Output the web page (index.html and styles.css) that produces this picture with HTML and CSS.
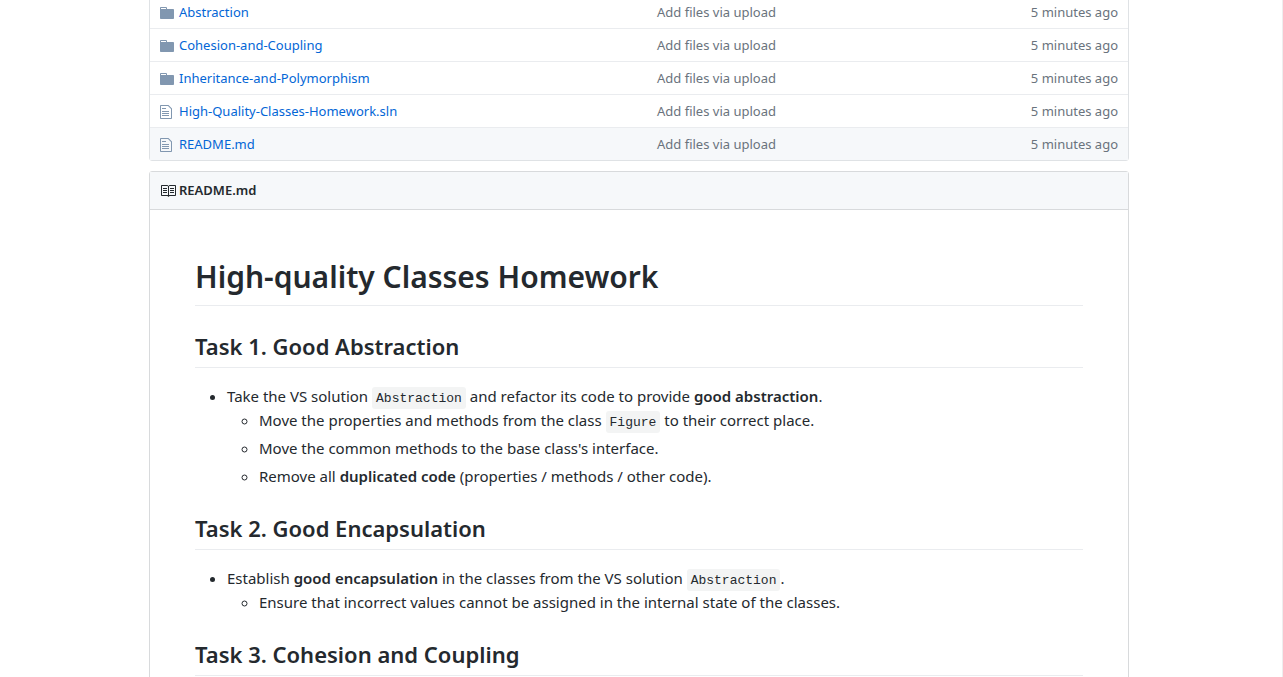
FILE: index.html
```
<!DOCTYPE html>
<html lang="en">
<head>
<meta charset="utf-8">
<title>High-quality Classes Homework</title>
<link rel="stylesheet" href="styles.css">
</head>
<body>
<svg class="sprite" aria-hidden="true">
  <symbol id="folder" viewBox="0 0 14 16"><path d="M13 4H7V3c0-.66-.31-1-1-1H1c-.55 0-1 .45-1 1v10c0 .55.45 1 1 1h12c.55 0 1-.45 1-1V5c0-.55-.45-1-1-1zM6 4H1V3h5v1z"/></symbol>
  <symbol id="file" viewBox="0 0 12 16"><path d="M6 5H2V4h4v1zM2 8h7V7H2v1zm0 2h7V9H2v1zm0 2h7v-1H2v1zm10-7.500V14c0 .55-.45 1-1 1H1c-.55 0-1-.45-1-1V2c0-.55.45-1 1-1h7.500L12 4.500zM11 5L8 2H1v12h10V5z"/></symbol>
  <symbol id="book" viewBox="0 0 16 16"><path d="M3 5h4v1H3V5zm0 3h4V7H3v1zm0 2h4V9H3v1zm11-5h-4v1h4V5zm0 2h-4v1h4V7zm0 2h-4v1h4V9zm2-6v9c0 .55-.45 1-1 1H9.500l-1 1-1-1H2c-.55 0-1-.45-1-1V3c0-.55.45-1 1-1h5.500l1 1 1-1H15c.55 0 1 .45 1 1zm-8 .5L7.500 3H2v9h6V3.500zm7-.5H9.500l-.5.5V12h6V3z"/></symbol>
</svg>
<main class="container">
  <div class="file-wrap">
    <table class="files">
      <tbody>
        <tr><td class="icon"><svg width="14" height="16"><use href="#folder"/></svg></td><td class="name"><a href="#">Abstraction</a></td><td class="message">Add files via upload</td><td class="age">5 minutes ago</td></tr>
        <tr><td class="icon"><svg width="14" height="16"><use href="#folder"/></svg></td><td class="name"><a href="#">Cohesion-and-Coupling</a></td><td class="message">Add files via upload</td><td class="age">5 minutes ago</td></tr>
        <tr><td class="icon"><svg width="14" height="16"><use href="#folder"/></svg></td><td class="name"><a href="#">Inheritance-and-Polymorphism</a></td><td class="message">Add files via upload</td><td class="age">5 minutes ago</td></tr>
        <tr><td class="icon"><svg width="12" height="16"><use href="#file"/></svg></td><td class="name"><a href="#">High-Quality-Classes-Homework.sln</a></td><td class="message">Add files via upload</td><td class="age">5 minutes ago</td></tr>
        <tr class="current"><td class="icon"><svg width="12" height="16"><use href="#file"/></svg></td><td class="name"><a href="#">README.md</a></td><td class="message">Add files via upload</td><td class="age">5 minutes ago</td></tr>
      </tbody>
    </table>
  </div>
  <section class="readme">
    <h3 class="readme-title"><svg width="16" height="16"><use href="#book"/></svg>README.md</h3>
    <article class="markdown">
      <h1>High-quality Classes Homework</h1>
      <h2>Task 1. Good Abstraction</h2>
      <ul>
        <li>Take the VS solution <code>Abstraction</code> and refactor its code to provide <strong>good abstraction</strong>.
          <ul>
            <li>Move the properties and methods from the class <code>Figure</code> to their correct place.</li>
            <li>Move the common methods to the base class's interface.</li>
            <li>Remove all <strong>duplicated code</strong> (properties / methods / other code).</li>
          </ul>
        </li>
      </ul>
      <h2>Task 2. Good Encapsulation</h2>
      <ul>
        <li>Establish <strong>good encapsulation</strong> in the classes from the VS solution <code>Abstraction</code>.
          <ul>
            <li>Ensure that incorrect values cannot be assigned in the internal state of the classes.</li>
          </ul>
        </li>
      </ul>
      <h2>Task 3. Cohesion and Coupling</h2>
    </article>
  </section>
</main>
</body>
</html>
```
FILE: styles.css
```
* {
  box-sizing: border-box;
}

html {
  scrollbar-width: none;
}

body {
  min-height: 100vh;
  margin: 0;
  padding-right: 4px;
  border-right: 1px solid #eee;
  background: #fff;
  color: #24292e;
  font: 13px/20px "Noto Sans", "Open Sans", sans-serif;
}

.sprite {
  display: none;
}

svg {
  display: block;
  fill: currentColor;
}

.container {
  display: flow-root;
  max-width: 980px;
  margin: 0 auto;
}

/* The list is scrolled slightly past the top edge of the window. */
.file-wrap {
  margin-top: -5px;
  margin-bottom: 10px;
  border: 1px solid #dfe2e5;
  border-radius: 3px;
}

.files {
  width: 100%;
  border-collapse: separate;
  border-spacing: 0;
  table-layout: fixed;
}

.files td {
  padding: 6px 3px;
  border-top: 1px solid #eaecef;
  vertical-align: top;
  white-space: nowrap;
}

.files tr:first-child td {
  border-top: 0;
}

.files .current td {
  background: #f6f8fa;
}

.files .icon {
  width: 26px;
  padding-left: 10px;
  padding-right: 0;
  color: #8197b0;
}

.icon svg {
  margin-top: 3px;
}

.files .message {
  width: 366px;
  color: #6a737d;
}

.files .age {
  width: 108px;
  padding-right: 10px;
  color: #6a737d;
  text-align: right;
}

a {
  color: #0366d6;
  text-decoration: none;
}

.readme {
  border: 1px solid #d8dadc;
  border-radius: 3px;
}

.readme-title {
  display: flex;
  align-items: center;
  gap: 3px;
  margin: 0;
  padding: 10px;
  border-bottom: 1px solid #d8dadc;
  background: #f6f8fa;
  font-size: 13px;
  font-weight: 600;
  line-height: 17px;
}

.markdown {
  padding: 45px;
  font-size: 15px;
  line-height: 24px;
}

.markdown h1,
.markdown h2 {
  margin: 24px 0 16px;
  border-bottom: 1px solid #eaecef;
  font-weight: 600;
}

.markdown h1 {
  margin-top: 0;
  padding-top: 2px;
  padding-bottom: 8px;
  font-size: 30px;
  line-height: 40px;
}

.markdown h2 {
  padding-top: 1px;
  padding-bottom: 6px;
  font-size: 22px;
  line-height: 30px;
}

.markdown ul {
  margin: 0 0 16px;
  padding-left: 32px;
}

.markdown ul ul {
  margin-bottom: 0;
}

.markdown li + li {
  margin-top: 4px;
}

.markdown strong {
  font-weight: 600;
}

.markdown code {
  padding: 4px 4px 3px;
  border-radius: 3px;
  background: #f3f4f4;
  font: 13px/15px "Liberation Mono", monospace;
}
```
